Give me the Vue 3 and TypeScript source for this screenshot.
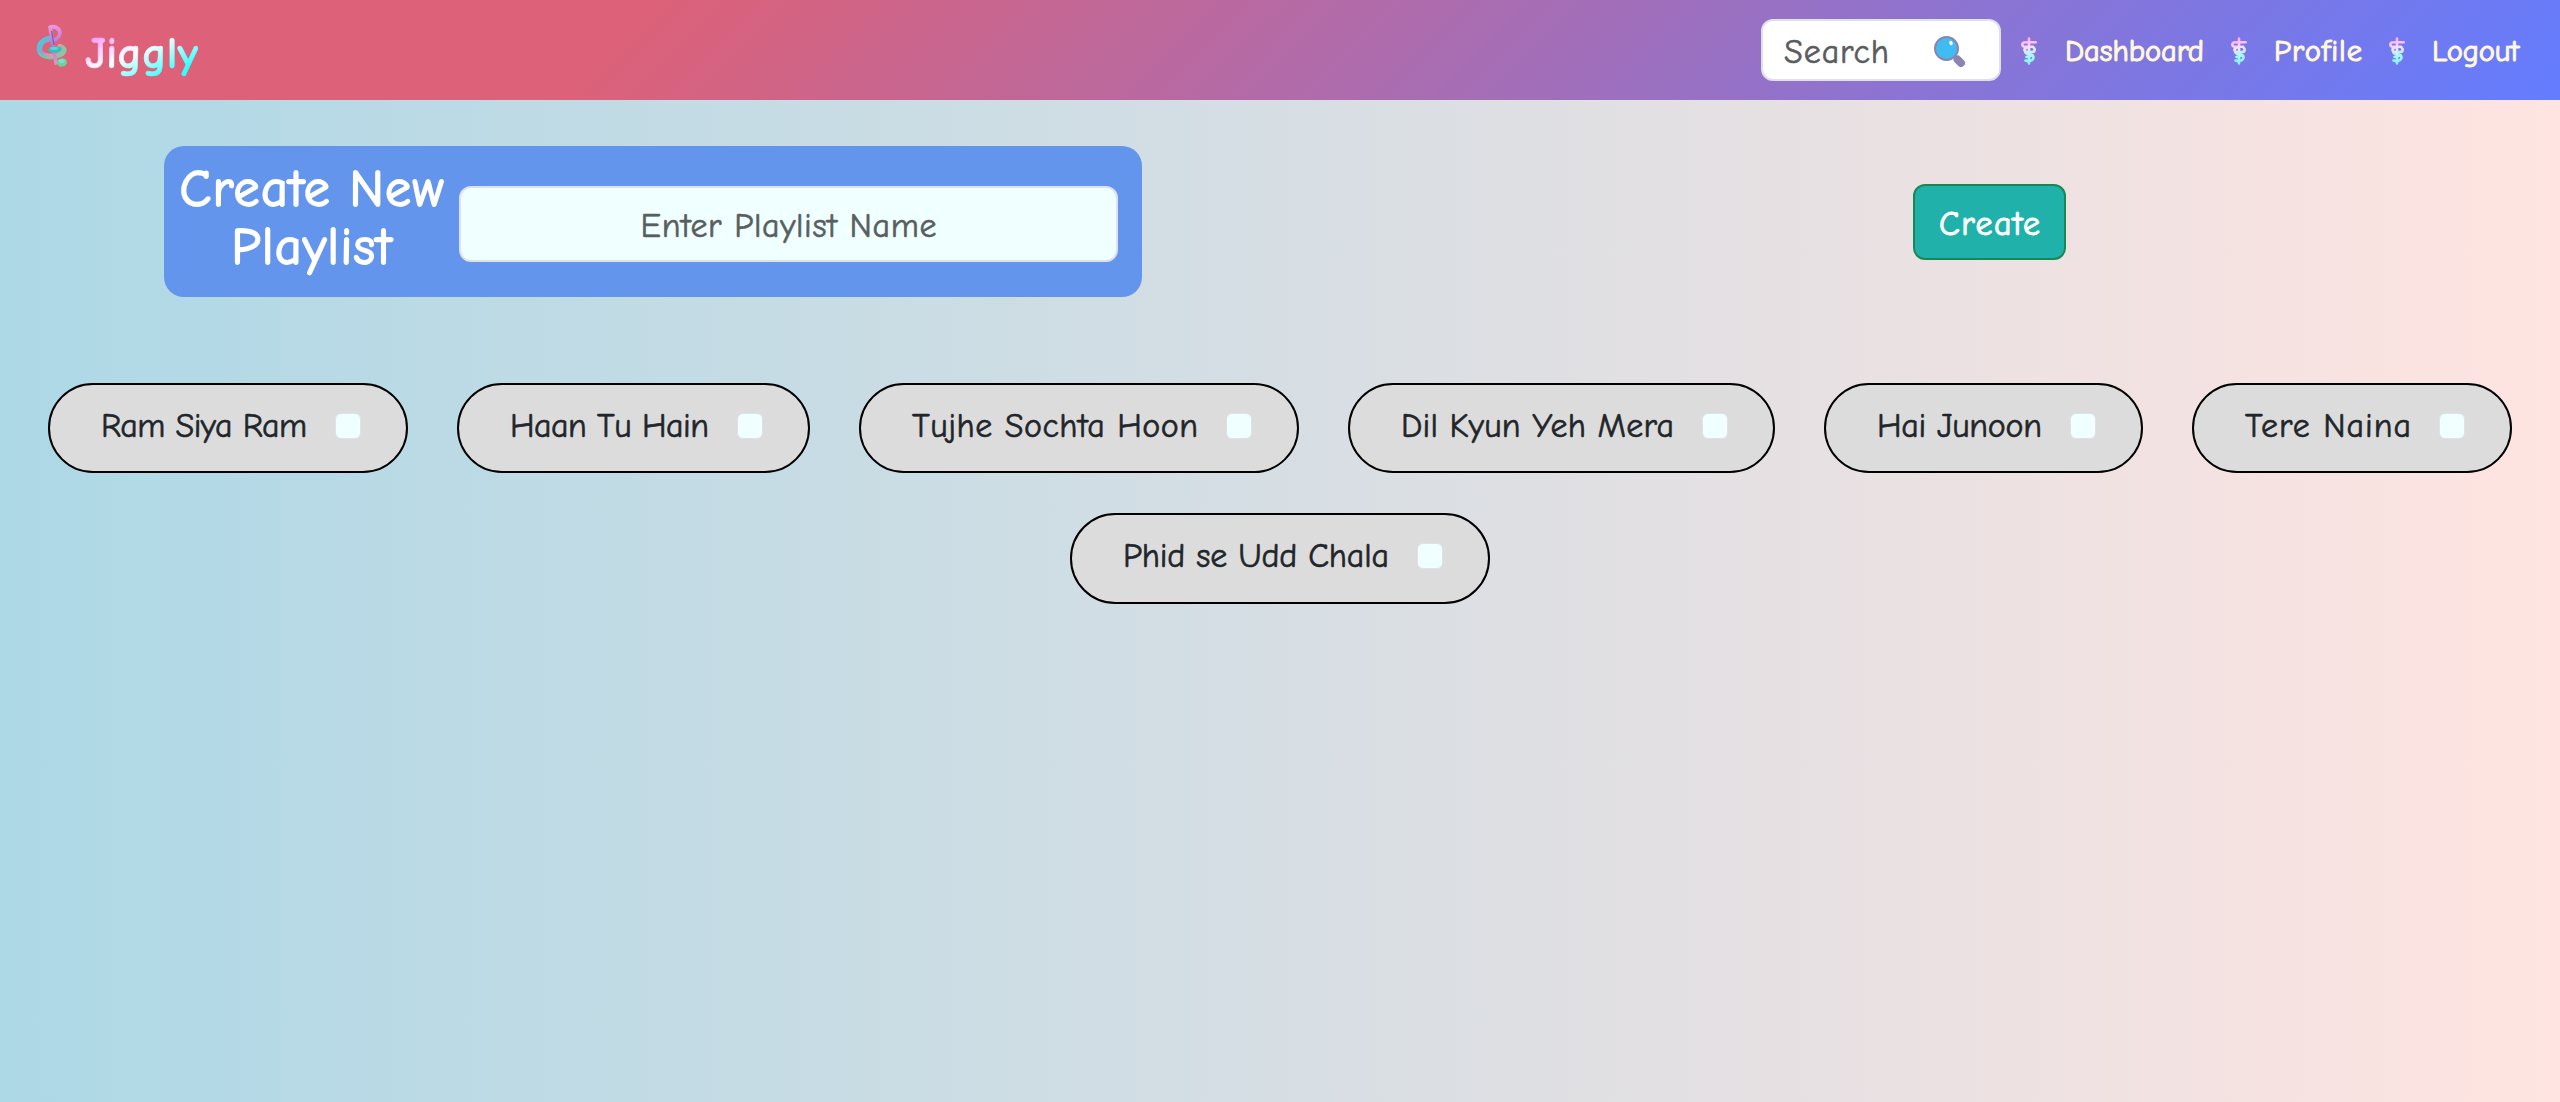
<script setup lang="ts">
interface Song { title: string; width: number }

const links = [
  { label: 'Dashboard', width: 139, gap: 28 },
  { label: 'Profile', width: 88, gap: 27 },
  { label: 'Logout', width: 87, gap: 27 },
]

const songs: Song[] = [
  { title: 'Ram Siya Ram', width: 360 },
  { title: 'Haan Tu Hain', width: 353 },
  { title: 'Tujhe Sochta Hoon', width: 440 },
  { title: 'Dil Kyun Yeh Mera', width: 427 },
  { title: 'Hai Junoon', width: 319 },
  { title: 'Tere Naina', width: 320 },
  { title: 'Phid se Udd Chala', width: 420 },
]

// Tracks a label so that it spans the given number of pixels.
const vFit = {
  mounted(el: HTMLElement, binding: { value: number }) {
    const natural = el.getBoundingClientRect().width
    const count = (el.textContent ?? '').length
    const spacing = (binding.value - natural) / (count - 1)
    el.style.letterSpacing = `${spacing}px`
    el.style.marginRight = `${-spacing}px`
  },
}
</script>

<template>
  <div class="page">
    <nav class="navbar">
      <div class="brand">
        <svg class="clef" viewBox="0 0 34 46" width="34" height="46">
          <defs>
            <linearGradient id="note" gradientUnits="userSpaceOnUse" x1="15" y1="3" x2="22" y2="40">
              <stop offset="0" stop-color="#ee96dc" />
              <stop offset=".5" stop-color="#b878d6" />
              <stop offset="1" stop-color="#e593bd" />
            </linearGradient>
            <linearGradient id="curl" x1="0" y1="0" x2="1" y2="0.5">
              <stop offset="0" stop-color="#37d2d9" />
              <stop offset=".4" stop-color="#8ea4cf" />
              <stop offset=".75" stop-color="#f2959a" />
              <stop offset="1" stop-color="#8cc4a4" />
            </linearGradient>
          </defs>
          <path d="M15 15.500C8 17 4 21 4.500 27C5 33 17 35.500 25 31.500C30 29 30.500 25.500 25 23.500" fill="none" stroke="url(#curl)" stroke-width="5.500" stroke-linecap="round" />
          <path d="M4 30C7 35 15 36.500 22 34.500" fill="none" stroke="#58d4ad" stroke-width="1.600" stroke-linecap="round" />
          <path d="M21 40L15 4C23 2.500 30 10 20 17" fill="none" stroke="url(#note)" stroke-width="3.800" stroke-linecap="round" stroke-linejoin="round" />
          <path d="M16.500 8L19 22" stroke="#6b62bb" stroke-width="1.300" />
          <ellipse cx="20" cy="26.500" rx="7" ry="3.200" fill="#35bfc0" transform="rotate(-6 20 26.500)" />
          <ellipse cx="19" cy="25.500" rx="4" ry="1.400" fill="#5fd6d2" />
          <ellipse cx="27" cy="39.500" rx="5" ry="4.200" fill="#6fcf9f" transform="rotate(-12 27 39.500)" />
          <ellipse cx="26.500" cy="38" rx="3.200" ry="1.900" fill="#7ce0cf" />
        </svg>
        <span v-fit="113" class="brand-name">Jiggly</span>
      </div>
      <div class="search">
        <span v-fit="105">Search</span>
        <svg class="lens" viewBox="0 0 32 32" width="32" height="32">
          <path d="M20 20L24 24" stroke="#8b83b0" stroke-width="3" />
          <path d="M23.500 23.500L27 27" stroke="#8b83b0" stroke-width="8" stroke-linecap="round" />
          <circle cx="12.500" cy="12.500" r="11.500" fill="#40bcf2" stroke="#8b83b0" stroke-width="2" />
          <ellipse cx="17" cy="7" rx="1.700" ry="2.300" fill="#fff" transform="rotate(-25 17 7)" />
        </svg>
      </div>
      <div class="links">
        <div v-for="link in links" :key="link.label" class="link">
          <svg class="staff" viewBox="0 0 16 28" width="16" height="28">
            <defs>
              <linearGradient id="staffFill" gradientUnits="userSpaceOnUse" x1="6" y1="0" x2="10" y2="28">
                <stop offset=".1" stop-color="#ffb0fb" />
                <stop offset=".42" stop-color="#f4e4ff" />
                <stop offset=".6" stop-color="#b8f4ff" />
                <stop offset="1" stop-color="#70fbff" />
              </linearGradient>
            </defs>
            <g fill="none" stroke="url(#staffFill)" stroke-width="2.600" stroke-linecap="round" stroke-linejoin="round">
              <path d="M8 1.500L8.010 26.500" />
              <path d="M14.700 5.200H4.500C.3 5.200.3 9.800 4 9.800H12" />
              <path d="M12.500 10.500C14.500 12 14 15 11 15H6C3 15 2.500 11.500 5.500 11" />
              <path d="M4.500 15.500C4.500 18 12.500 16 12.500 20C12.500 24.500 7 24.500 4.500 23.500" />
              <path d="M11.500 18.500L5.500 20" />
            </g>
          </svg>
          <a v-fit="link.width" :style="{ marginLeft: link.gap + 'px' }">{{ link.label }}</a>
        </div>
      </div>
    </nav>

    <section class="creator">
      <div class="panel">
        <h1 class="title">
          <span v-fit="264">Create New</span>
          <span v-fit="160">Playlist</span>
        </h1>
        <div class="field"><span v-fit="296">Enter Playlist Name</span></div>
      </div>
      <button class="create"><span v-fit="101">Create</span></button>
    </section>

    <section class="songs">
      <label v-for="song in songs" :key="song.title" class="song" :style="{ width: song.width + 'px' }">
        <span v-fit="song.width - 154" class="song-title">{{ song.title }}</span>
        <i class="check"></i>
      </label>
    </section>
  </div>
</template>

<style>
body { margin: 0; }
</style>

<style scoped>
* { box-sizing: border-box; }
.page {
  width: 2560px;
  height: 1102px;
  overflow: hidden;
  font-family: "Comic Sans MS", "Comic Neue", "Open Sans", sans-serif;
  font-size: 34px;
  color: #212529;
  -webkit-text-stroke: 0.6px currentColor;
  background: linear-gradient(to right, #add8e6, #ffe4e1);
}
span, a { white-space: nowrap; }
.navbar {
  height: 100px;
  display: flex;
  align-items: center;
  background: linear-gradient(135deg, #dc6179 25%, #637dff 100%);
}
.brand { display: flex; align-items: center; margin-left: 35px; width: 1726px; }
.clef { display: block; margin-top: -8px; }
.brand-name {
  margin-left: 16px;
  padding-top: 5px;
  font-size: 45px;
  font-weight: 700;
  line-height: 60px;
  color: transparent;
  background: linear-gradient(155deg, #ff9cff 20%, #fff 48%, #3ff 82%);
  background-clip: text;
  -webkit-background-clip: text;
}
.search {
  width: 240px;
  height: 62px;
  padding-left: 21px;
  display: flex;
  align-items: center;
  border: 2px solid #dee2e6;
  border-radius: 12px;
  background: #fff;
  color: #595c5f;
}
.search span { padding-top: 4px; }
.lens { display: block; margin-left: auto; margin-right: 33px; margin-top: 3px; }
.links { display: flex; margin-left: 20px; }
.link { display: flex; align-items: center; margin-right: 27px; }
.staff { display: block; margin-top: 2px; }
.link a {
  font-size: 30.5px;
  line-height: 40px;
  padding-top: 4px;
  color: #fff8dc;
  -webkit-text-stroke: 1.1px #fff8dc;
}
.creator { display: flex; margin-top: 46px; padding-left: 164px; height: 151px; }
.panel {
  width: 978px;
  height: 151px;
  display: flex;
  border-radius: 20px;
  background: #6495ed;
}
.title {
  width: 261px;
  margin: 14px 0 0 17px;
  display: flex;
  flex-direction: column;
  align-items: center;
  font-size: 52px;
  font-weight: 400;
  line-height: 58px;
  color: #fff;
  -webkit-text-stroke: 1.8px #fff;
}
.field {
  width: 659px;
  height: 76px;
  margin: 40px 0 0 17px;
  padding-top: 4px;
  display: flex;
  align-items: center;
  justify-content: center;
  border: 2px solid #dee2e6;
  border-radius: 12px;
  background: #f0ffff;
  color: #585e60;
}
.create {
  width: 153px;
  height: 76px;
  margin: 38px 0 0 771px;
  padding: 4px 0 0;
  border: 2px solid #198754;
  border-radius: 12px;
  background: #20b2aa;
  font: inherit;
  color: #fff;
  -webkit-text-stroke: 1px #fff;
}
.songs {
  display: flex;
  flex-wrap: wrap;
  justify-content: center;
  gap: 40px 49px;
  margin-top: 86px;
}
.song {
  height: 90.4px;
  padding: 0 46px 5px 51px;
  display: flex;
  align-items: center;
  justify-content: space-between;
  border: 2px solid #000;
  border-radius: 50px;
  background: #dcdcdc;
}
.song-title { margin-top: 0; }
.check {
  width: 26px;
  height: 26px;
  flex: none;
  margin-right: -1px;
  border: 1px solid #dee2e6;
  border-radius: 6px;
  background: #f0ffff;
}
</style>
